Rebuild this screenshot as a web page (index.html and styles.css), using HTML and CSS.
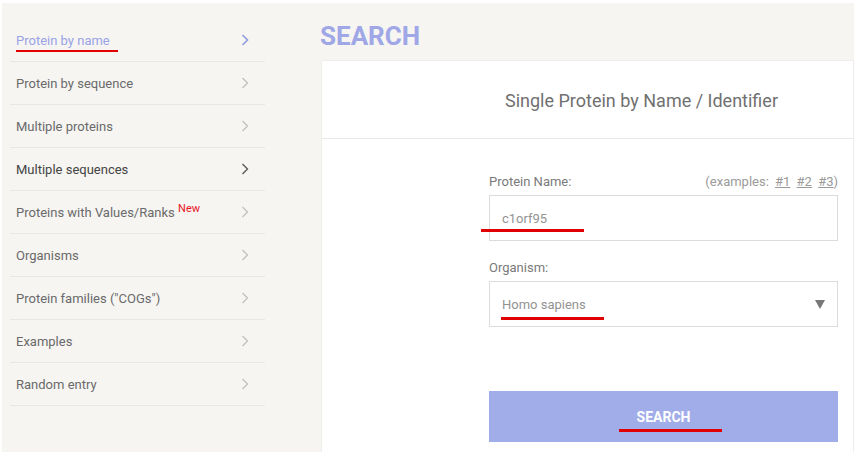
FILE: index.html
```html
<!DOCTYPE html>
<html lang="en">
<head>
    <meta charset="UTF-8">
    <meta name="viewport" content="width=device-width, initial-scale=1.0">
    <title>Search - Single Protein by Name</title>
    <link rel="stylesheet" href="styles.css">
</head>
<body>
    <div class="page">
        <div class="sidebar">
            <div class="nav-item active">
                <span>Protein by name</span>
                <svg class="chev" viewBox="0 0 8 12"><polyline points="1.5,1 6.5,6 1.5,11"/></svg>
                <span class="mark mark-nav"></span>
            </div>
            <div class="nav-item">
                <span>Protein by sequence</span>
                <svg class="chev" viewBox="0 0 8 12"><polyline points="1.5,1 6.5,6 1.5,11"/></svg>
            </div>
            <div class="nav-item">
                <span>Multiple proteins</span>
                <svg class="chev" viewBox="0 0 8 12"><polyline points="1.5,1 6.5,6 1.5,11"/></svg>
            </div>
            <div class="nav-item dark">
                <span>Multiple sequences</span>
                <svg class="chev" viewBox="0 0 8 12"><polyline points="1.5,1 6.5,6 1.5,11"/></svg>
            </div>
            <div class="nav-item">
                <span>Proteins with Values/Ranks <sup class="new">New</sup></span>
                <svg class="chev" viewBox="0 0 8 12"><polyline points="1.5,1 6.5,6 1.5,11"/></svg>
            </div>
            <div class="nav-item">
                <span>Organisms</span>
                <svg class="chev" viewBox="0 0 8 12"><polyline points="1.5,1 6.5,6 1.5,11"/></svg>
            </div>
            <div class="nav-item">
                <span>Protein families ("COGs")</span>
                <svg class="chev" viewBox="0 0 8 12"><polyline points="1.5,1 6.5,6 1.5,11"/></svg>
            </div>
            <div class="nav-item">
                <span>Examples</span>
                <svg class="chev" viewBox="0 0 8 12"><polyline points="1.5,1 6.5,6 1.5,11"/></svg>
            </div>
            <div class="nav-item">
                <span>Random entry</span>
                <svg class="chev" viewBox="0 0 8 12"><polyline points="1.5,1 6.5,6 1.5,11"/></svg>
            </div>
        </div>

        <div class="main">
            <h1 class="title">SEARCH</h1>
            <div class="card">
                <div class="card-head">Single Protein by Name / Identifier</div>
                <form class="form" onsubmit="return false">
                    <div class="label-row">
                        <label>Protein Name:</label>
                        <span class="examples">(examples: <a href="#">#1</a> <a href="#">#2</a> <a href="#">#3</a>)</span>
                    </div>
                    <div class="field">
                        <span class="value">c1orf95</span>
                        <span class="mark mark-input"></span>
                    </div>
                    <div class="label-row">
                        <label>Organism:</label>
                    </div>
                    <div class="field select">
                        <span class="value">Homo sapiens</span>
                        <svg class="arrow" viewBox="0 0 10 9"><polygon points="0,0 10,0 5,9"/></svg>
                        <span class="mark mark-select"></span>
                    </div>
                    <button class="btn">SEARCH<span class="mark mark-btn"></span></button>
                </form>
            </div>
        </div>
    </div>
</body>
</html>
```

FILE: styles.css
```css
html, body {
    margin: 0;
    padding: 0;
    background: #fff;
    overflow: hidden;
    font-family: Roboto, "Liberation Sans", sans-serif;
}

.page {
    display: flex;
    margin: 3px 0 0 2px;
    height: 449px;
    background: #f6f5f2;
}

.sidebar {
    width: 318px;
    flex-shrink: 0;
    padding-top: 16px;
}

.nav-item {
    position: relative;
    display: flex;
    align-items: center;
    justify-content: space-between;
    height: 42px;
    width: 233px;
    margin-left: 8px;
    padding: 0 16px 0 6px;
    border-bottom: 1px solid #e9e7e3;
    font-size: 13px;
    color: #6a6a6a;
}

.nav-item .chev {
    width: 8px;
    height: 12px;
    fill: none;
    stroke: #c0c0c0;
    stroke-width: 1.3;
}

.nav-item.active {
    color: #9aa3e6;
}

.nav-item.active .chev {
    stroke: #8e99e0;
    stroke-width: 1.6;
}

.nav-item.dark {
    color: #444;
}

.nav-item.dark .chev {
    stroke: #555;
}

.new {
    color: #e8141e;
    font-size: 11px;
    vertical-align: 5px;
    line-height: 0;
}

.main {
    flex: 1;
    min-width: 0;
    display: flex;
    flex-direction: column;
}

.title {
    margin: 0;
    height: 47px;
    padding-top: 10px;
    font-size: 26px;
    font-weight: 700;
    line-height: 47px;
    color: #9fa7e6;
}

.card {
    flex: 1;
    margin-left: 1px;
    margin-bottom: -9px;
    background: #fff;
    border: 1px solid #efedea;
    border-bottom: none;
}

.card-head {
    height: 77px;
    line-height: 79px;
    padding-left: 183px;
    border-bottom: 1px solid #e8e8e8;
    font-size: 18px;
    color: #707070;
}

.form {
    width: 349px;
    margin: 32px 0 0 167px;
}

.label-row {
    display: flex;
    justify-content: space-between;
    align-items: center;
    height: 20px;
    margin-bottom: 4px;
    font-size: 13px;
    color: #7a7a7a;
}

.examples {
    color: #9a9a9a;
}

.examples a {
    color: #9a9a9a;
    margin-left: 3px;
}

.field {
    position: relative;
    display: flex;
    align-items: center;
    justify-content: space-between;
    height: 46px;
    padding: 0 12px;
    border: 1px solid #dcdcdc;
    box-sizing: border-box;
    margin-bottom: 16px;
    font-size: 13px;
    color: #939393;
}

.field.select {
    margin-bottom: 64px;
}

.field .arrow {
    width: 10px;
    height: 9px;
    fill: #777;
}

.btn {
    position: relative;
    display: block;
    width: 100%;
    height: 51px;
    border: none;
    background: #a1ade9;
    color: #fff;
    font-family: Roboto, "Liberation Sans", sans-serif;
    font-size: 14px;
    font-weight: 700;
    padding: 0;
}

.mark {
    position: absolute;
    height: 3px;
    width: 103px;
    background: #e00000;
}

.mark-nav {
    left: 6px;
    width: 102px;
    top: 31px;
    height: 2px;
}

.mark-input {
    left: -9px;
    top: 33px;
}

.mark-select {
    left: 11px;
    top: 35px;
}

.mark-btn {
    left: 130px;
    top: 38px;
}
```
